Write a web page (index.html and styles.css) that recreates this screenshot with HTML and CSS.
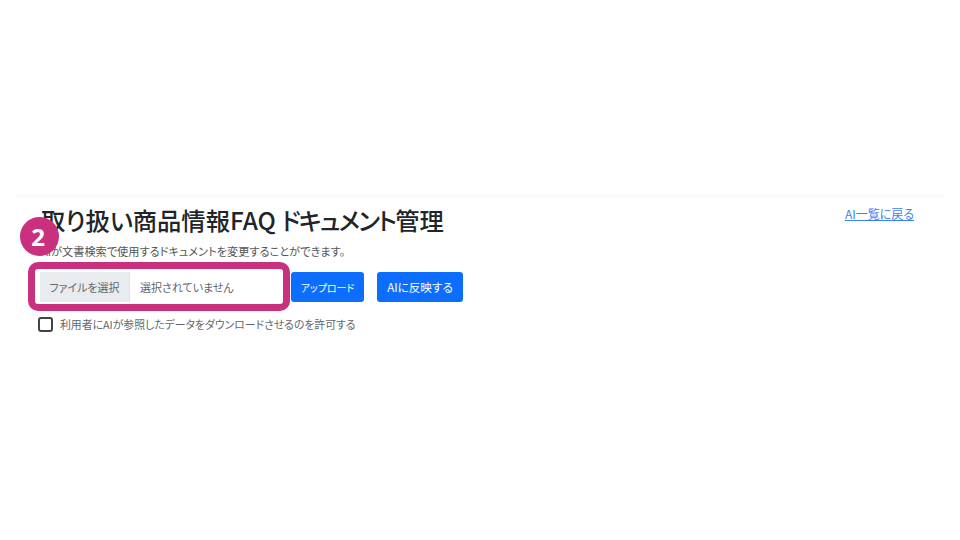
FILE: index.html
```html
<!DOCTYPE html>
<html lang="ja">
<head>
  <meta charset="UTF-8" />
  <meta name="viewport" content="width=device-width, initial-scale=1.0"/>
  <title>ドキュメント管理</title>
  <link rel="stylesheet" href="styles.css">
</head>
<body>
  <div class="panel">
    <div class="header">
      <div class="heading">
        <h1 class="title">取り扱い商品情報FAQ <span class="kana">ドキュメント</span>管理</h1>
        <p class="lead">AIが文書検索で使用するドキュメントを変更することができます。</p>
      </div>
      <a class="back" href="#">AI一覧に戻る</a>
    </div>

    <div class="upload-row">
      <div class="file-input">
        <span class="file-btn">ファイルを選択</span>
        <span class="file-name">選択されていません</span>
      </div>
      <button class="btn btn-upload">アップロード</button>
      <button class="btn btn-apply">AIに反映する</button>
    </div>

    <label class="check-row">
      <span class="check"></span>
      <span>利用者にAIが参照したデータをダウンロードさせるのを許可する</span>
    </label>

    <div class="highlight"></div>
    <div class="badge">2</div>
  </div>
</body>
</html>
```

FILE: styles.css
```css
body {
  font-family: "Noto Sans CJK JP", "Noto Sans", sans-serif;
  background-color: #fff;
  color: #212529;
  margin: 0;
  padding: 0;
}

.panel {
  position: relative;
  margin: 194px 16px 0;
  padding: 6px 30px 0 25px;
  border-top: 4px solid #fafafa;
  font-feature-settings: "palt";
}

.header {
  display: flex;
  justify-content: space-between;
  align-items: flex-start;
}

.title {
  font-size: 24.3px;
  font-weight: 500;
  line-height: 32px;
  margin: 0;
}

.kana {
  letter-spacing: -1.7px;
}

.lead {
  font-size: 11.2px;
  line-height: 18px;
  color: #555;
  margin: 6px 0 0;
}

.back {
  font-size: 12px;
  line-height: 18px;
  color: #3b82f6;
  margin-top: 1px;
}

.upload-row {
  display: flex;
  align-items: center;
  margin-top: 12px;
  margin-left: -1px;
}

.file-input {
  display: flex;
  width: 243px;
  height: 30px;
  font-size: 11px;
  line-height: 30px;
  color: #5f666d;
  background-color: #fff;
  margin-right: 8px;
}

.file-btn {
  width: 89px;
  text-align: center;
  background-color: #e9ecef;
  border-right: 1px solid #dee2e6;
}

.file-name {
  padding-left: 10px;
}

.btn {
  height: 30px;
  padding: 0;
  border: 0;
  border-radius: 3px;
  font-family: inherit;
  font-feature-settings: inherit;
  font-size: 10px;
  color: #fff;
  background-color: #0d6efd;
}

.btn-upload {
  width: 73px;
  margin-right: 13px;
}

.btn-apply {
  width: 86px;
  font-size: 11.6px;
}

.check-row {
  display: flex;
  align-items: center;
  gap: 7px;
  margin-top: 13px;
  margin-left: -3px;
  font-size: 10.85px;
  line-height: 18px;
  color: #5f666d;
}

.check {
  width: 11px;
  height: 11px;
  border: 2px solid #444;
  border-radius: 3px;
}

.highlight {
  position: absolute;
  left: 12px;
  top: 64px;
  width: 248px;
  height: 35px;
  border: 7px solid #c9317f;
  border-radius: 10px;
}

.badge {
  position: absolute;
  left: 4px;
  top: 19px;
  width: 36px;
  height: 39px;
  padding-right: 3px;
  border-radius: 50%;
  background-color: #c9317f;
  color: #fff;
  font-family: "Open Sans", sans-serif;
  font-size: 24px;
  font-weight: 700;
  line-height: 39px;
  text-align: center;
}
```
